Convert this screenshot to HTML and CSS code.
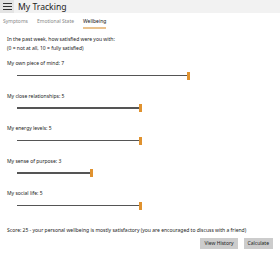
FILE: index.html
```html
<!DOCTYPE html>
<html lang="en">
<head>
    <meta charset="UTF-8">
    <title>My Tracking</title>
    <link rel="stylesheet" href="styles.css">
</head>
<body>

<div class="topbar">
    <div class="menu-btn">
        <svg width="9" height="7" viewBox="0 0 9 7">
            <rect x="0" y="0" width="9" height="1" fill="#333"/>
            <rect x="0" y="3" width="9" height="1" fill="#333"/>
            <rect x="0" y="6" width="9" height="1" fill="#333"/>
        </svg>
    </div>
    <div class="title">My Tracking</div>
</div>

<ul class="tabs">
    <li>Symptoms</li>
    <li>Emotional State</li>
    <li class="active">Wellbeing</li>
</ul>

<div class="content">
    <p class="intro">In the past week, how satisfied were you with:</p>
    <p class="intro">(0 = not at all, 10 = fully satisfied)</p>

    <div class="item">
        <div class="label">My own piece of mind: 7</div>
        <div class="slider"><div class="fill" style="width:70%"></div><div class="thumb"></div></div>
    </div>
    <div class="item">
        <div class="label">My close relationships: 5</div>
        <div class="slider"><div class="fill" style="width:50%"></div><div class="thumb"></div></div>
    </div>
    <div class="item">
        <div class="label">My energy levels: 5</div>
        <div class="slider"><div class="fill" style="width:50%"></div><div class="thumb"></div></div>
    </div>
    <div class="item">
        <div class="label">My sense of purpose: 3</div>
        <div class="slider"><div class="fill" style="width:30%"></div><div class="thumb"></div></div>
    </div>
    <div class="item">
        <div class="label">My social life: 5</div>
        <div class="slider"><div class="fill" style="width:50%"></div><div class="thumb"></div></div>
    </div>

    <p class="score">Score: 25 - your personal wellbeing is mostly satisfactory (you are encouraged to discuss with a friend)</p>

    <div class="buttons">
        <a href="javascript:;" class="btn">View History</a>
        <a href="javascript:;" class="btn">Calculate</a>
    </div>
</div>
</body>
</html>
```
FILE: styles.css
```css
*{
    margin: 0px;
    padding: 0px;
}
body{
    width: 280px;
    height: 253px;
    background-color: #fff;
    font-family: "Noto Sans", "Open Sans", sans-serif;
    color: #222;
    overflow: hidden;
}
.topbar{
    display: flex;
    align-items: center;
    height: 13px;
    background-color: #f2f2f2;
}
.menu-btn{
    width: 14px;
    height: 13px;
    background-color: #e4e4e4;
    display: flex;
    align-items: center;
    justify-content: center;
}
.menu-btn svg{
    display: block;
}
.title{
    margin-left: 4px;
    font-size: 8.6px;
    color: #222;
}
.tabs{
    display: flex;
    list-style: none;
    margin-top: 3px;
    padding-left: 3px;
    font-size: 5px;
    color: #888;
}
.tabs li{
    margin-right: 9px;
    padding: 2px 0 3px;
}
.tabs li.active{
    color: #111;
    border-bottom: 2px solid #eac28e;
}
.content{
    padding: 6px 7px 0;
}
.intro{
    font-size: 5px;
    line-height: 9px;
}
.item{
    padding: 6px 0;
}
.label{
    font-size: 5px;
    line-height: 9px;
}
.slider{
    display: flex;
    align-items: center;
    width: 243px;
    height: 8px;
    margin: 3.5px 0 0 10px;
}
.fill{
    height: 1.5px;
    background-color: #555;
}
.thumb{
    width: 3px;
    height: 8px;
    background-color: #e0922f;
}
.score{
    margin-top: 10.5px;
    font-size: 5px;
    line-height: 9px;
}
.buttons{
    display: flex;
    justify-content: flex-end;
    margin-top: 2.5px;
}
.btn{
    display: block;
    margin-left: 6px;
    padding: 2px 4px;
    background-color: #ccc;
    color: #222;
    font-size: 5px;
    line-height: 7px;
    text-decoration: none;
}
```
